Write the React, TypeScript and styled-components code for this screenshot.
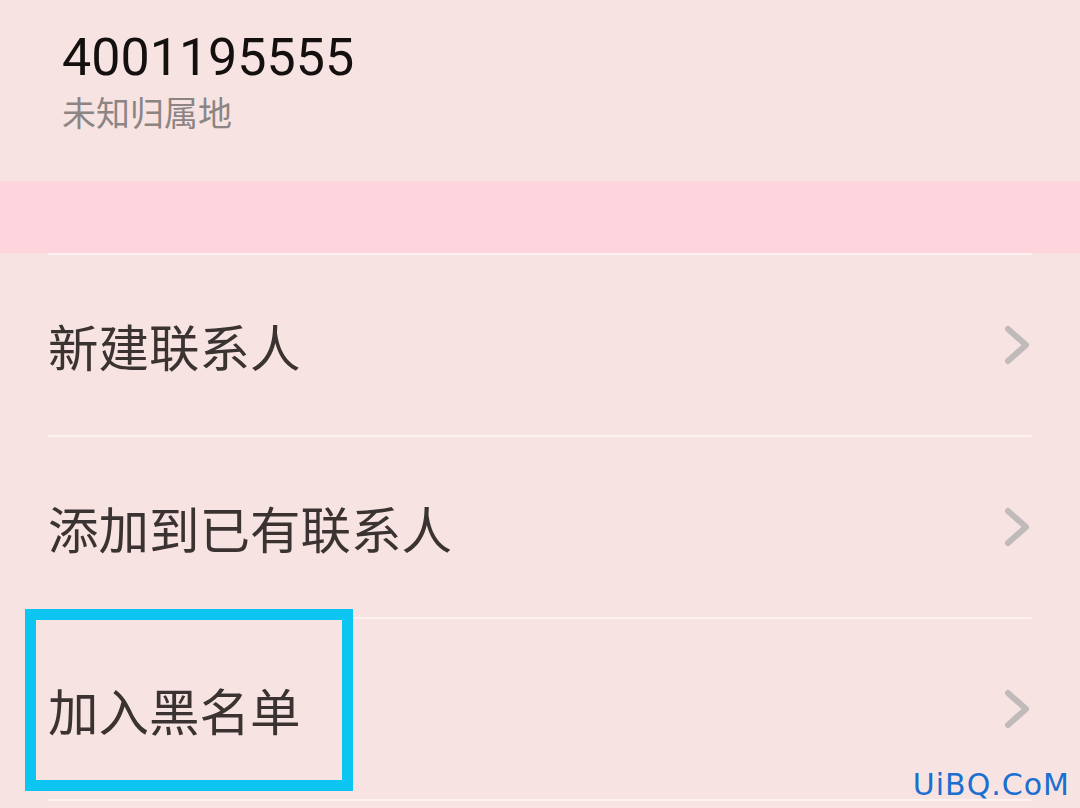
import React, { FunctionComponent } from 'react';
import styled, { createGlobalStyle } from 'styled-components';

const GlobalStyle = createGlobalStyle`
  html, body {
    margin: 0;
    padding: 0;
    background: #f7e4e2;
  }
  body {
    font-family: Roboto, "Noto Sans CJK SC", sans-serif;
  }
`;

const S = {
  Page: styled.div`
    position: relative;
    width: 1080px;
    height: 808px;
    overflow: hidden;
    background: #f7e4e2;
  `,

  Header: styled.div`
    height: 181px;
    box-sizing: border-box;
    padding: 27px 0 0 62px;
    display: flex;
    flex-direction: column;
  `,

  Number: styled.div`
    font-family: Roboto, sans-serif;
    font-size: 52px;
    line-height: 62px;
    color: #141010;
  `,

  Location: styled.div`
    font-family: "Noto Sans CJK SC", sans-serif;
    font-size: 34px;
    line-height: 45px;
    color: #8c8584;
  `,

  Band: styled.div`
    height: 72px;
    background: #ffd5dd;
  `,

  List: styled.div`
    margin: 0 48px;
    display: flex;
    flex-direction: column;
  `,

  Row: styled.div`
    position: relative;
    height: 180px;
    border-top: 2px solid #fcf2f1;
    display: flex;
    align-items: center;
    justify-content: space-between;
  `,

  Label: styled.span`
    font-family: "Noto Sans CJK SC", sans-serif;
    font-size: 50.5px;
    color: #3b3332;
  `,

  Chevron: styled.svg`
    width: 30px;
    height: 42px;
  `,

  Highlight: styled.div`
    position: absolute;
    left: -23px;
    top: -10px;
    width: 328px;
    height: 182px;
    box-sizing: border-box;
    border: 11px solid #0cc6f1;
  `,

  Watermark: styled.div`
    position: absolute;
    right: 10px;
    bottom: 6px;
    font-family: "DejaVu Sans", sans-serif;
    font-size: 30px;
    color: #1a6fd1;
    letter-spacing: 1px;
  `,
};

const ChevronIcon: FunctionComponent = () => (
  <S.Chevron viewBox="0 0 30 42">
    <path d="M6 5 L24 21 L6 37" fill="none" stroke="#c0bbba" strokeWidth="6" strokeLinecap="round" strokeLinejoin="round" />
  </S.Chevron>
);

const items = [
  { label: '新建联系人' },
  { label: '添加到已有联系人' },
  { label: '加入黑名单', highlighted: true },
];

const App: FunctionComponent = () => (
  <S.Page>
    <GlobalStyle />
    <S.Header>
      <S.Number>4001195555</S.Number>
      <S.Location>未知归属地</S.Location>
    </S.Header>
    <S.Band />
    <S.List>
      {items.map((item) => (
        <S.Row key={item.label}>
          <S.Label>{item.label}</S.Label>
          <ChevronIcon />
          {item.highlighted && <S.Highlight />}
        </S.Row>
      ))}
      <S.Row />
    </S.List>
    <S.Watermark>UiBQ.CoM</S.Watermark>
  </S.Page>
);

export default App;
